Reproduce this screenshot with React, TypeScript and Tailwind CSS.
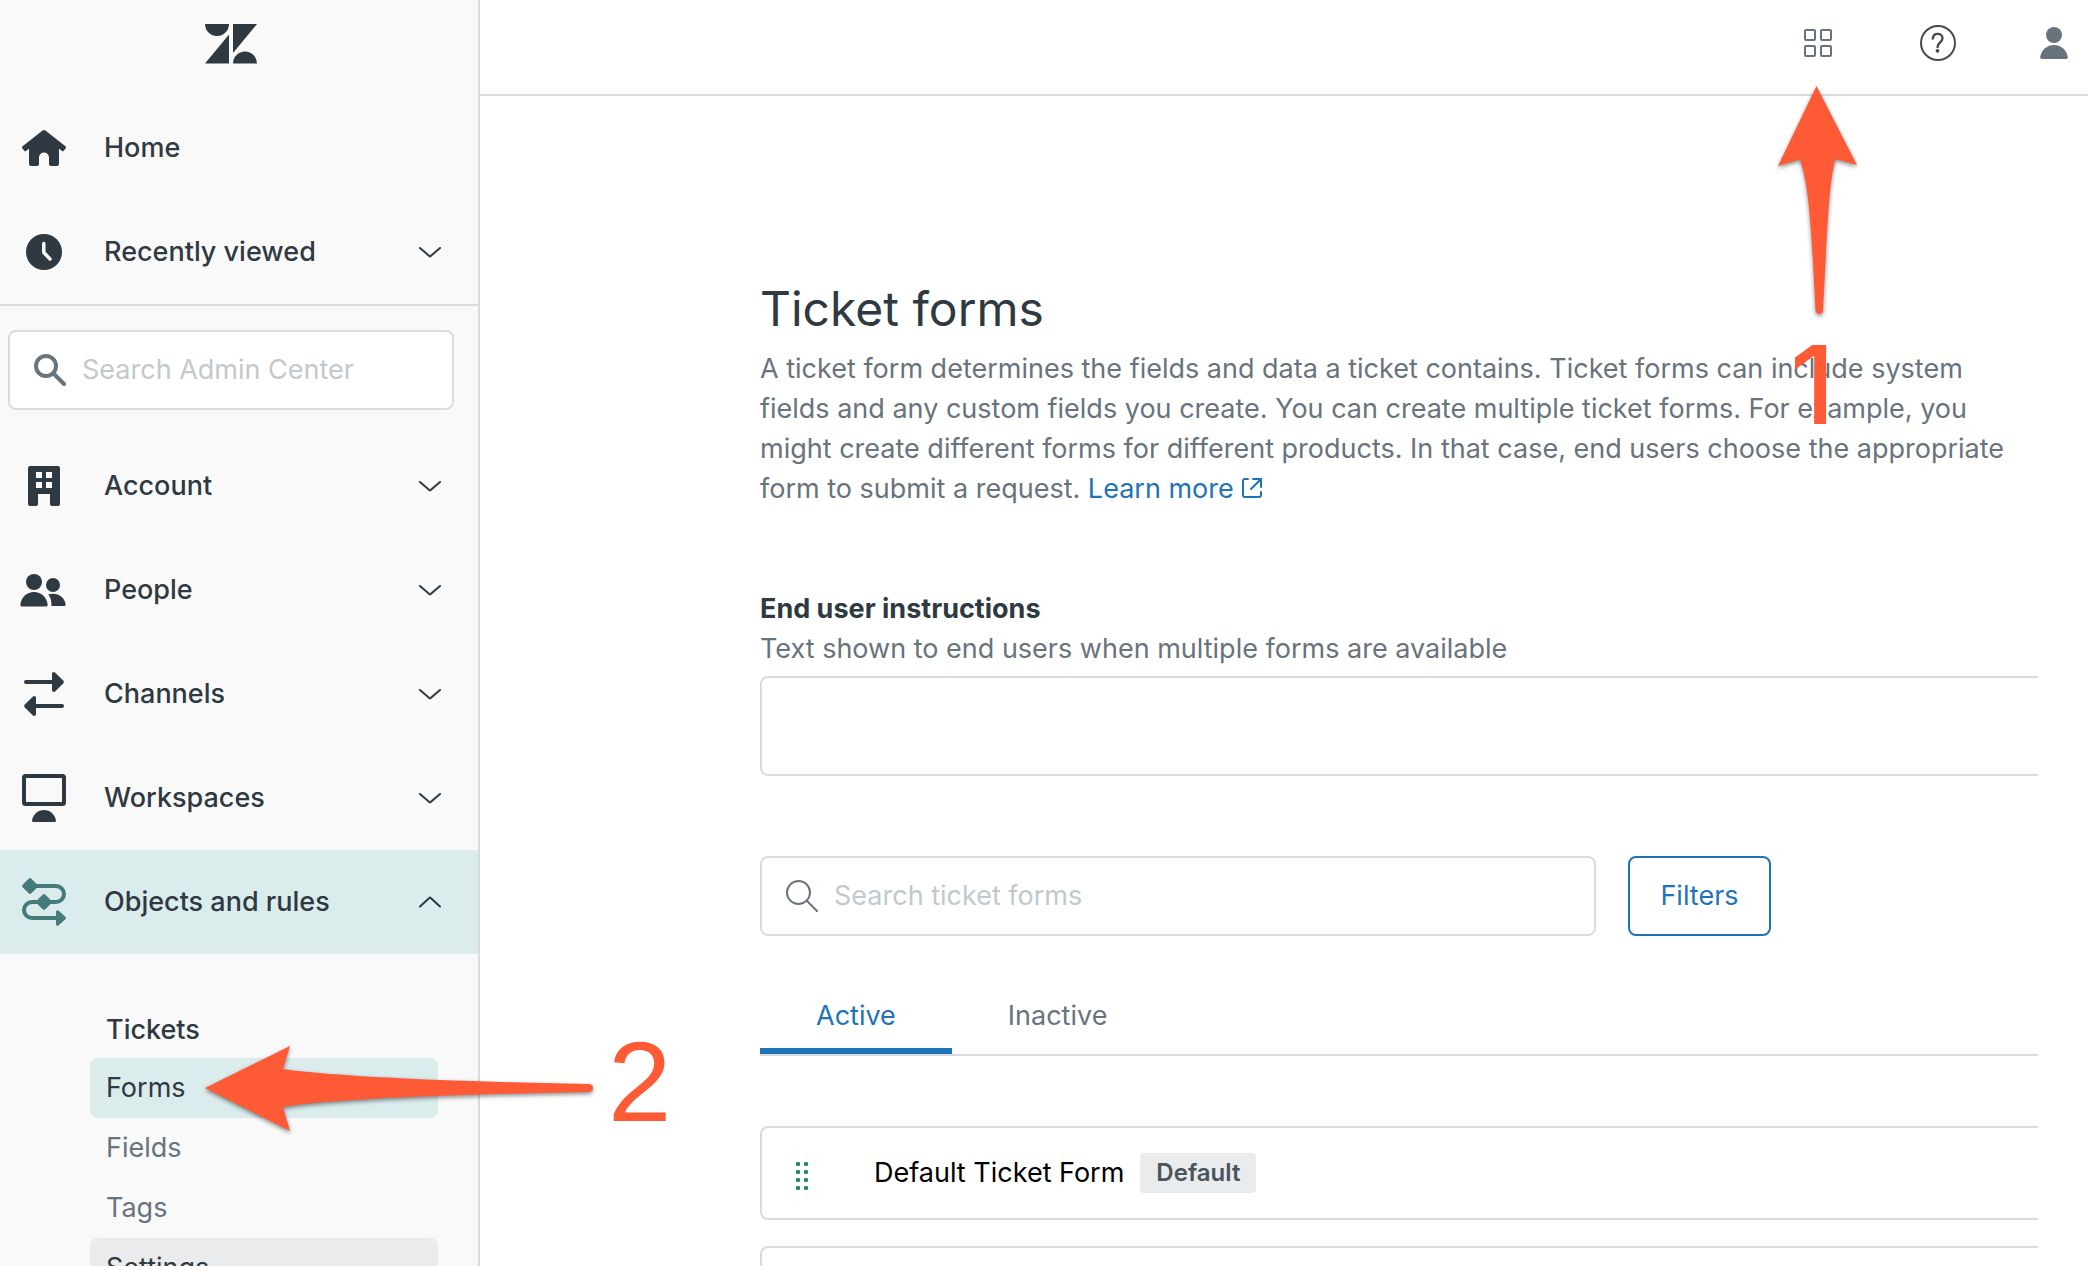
import { useState, type ReactNode } from "react";

interface NavItem {
  label: string;
  icon: ReactNode;
}

const buildingIcon = (
  <path
    fillRule="evenodd"
    d="M10 4h28a2 2 0 0 1 2 2v36a2 2 0 0 1-2 2h-6a2 2 0 0 1-2-2V32H18v10a2 2 0 0 1-2 2h-6a2 2 0 0 1-2-2V6a2 2 0 0 1 2-2Zm6 6v6h6v-6Zm10 0v6h6v-6ZM16 20v6h6v-6Zm10 0v6h6v-6Z"
  />
);

const peopleIcon = (
  <>
    <circle cx="14" cy="16" r="8" />
    <circle cx="33" cy="19" r="7" />
    <path d="M2 40.500C.8 40.500.3 39.800.4 38.600 1.300 31 6.800 26 14 26s12.700 5 13.600 12.600c.1 1.200-.4 1.900-1.600 1.900Z" />
    <path d="M28.200 28.400c1.500-.5 3-.7 4.800-.7 6.600 0 11.800 4.200 12.600 10.600.1 1-.3 1.700-1.300 1.700H31.400c.2-5-.5-8.600-3.200-11.600Z" />
  </>
);

const channelsIcon = (
  <>
    <path d="M6 12h28M42 36H14" fill="none" stroke="currentColor" strokeWidth="4" strokeLinecap="round" />
    <path d="M32 4c0-1.800 1.600-2.600 3-1.400l8.200 8c.9.900.9 1.900 0 2.800l-8.200 8c-1.400 1.200-3 .4-3-1.400Z" />
    <path d="M16 28c0-1.800-1.600-2.600-3-1.400l-8.200 8c-.9.900-.9 1.900 0 2.800l8.200 8c1.400 1.200 3 .4 3-1.400Z" />
  </>
);

const workspacesIcon = (
  <>
    <rect x="4" y="2" width="40" height="28" rx="1.500" fill="none" stroke="currentColor" strokeWidth="4" />
    <path d="M13.500 48c-1.200 0-1.700-.8-1.400-2C13.500 40 18 36 24 36s10.500 4 11.900 10c.3 1.200-.2 2-1.400 2Z" />
  </>
);

const navItems: NavItem[] = [
  { label: "Account", icon: buildingIcon },
  { label: "People", icon: peopleIcon },
  { label: "Channels", icon: channelsIcon },
  { label: "Workspaces", icon: workspacesIcon },
];

function NavIcon({ children, className = "" }: { children: ReactNode; className?: string }) {
  return (
    <svg viewBox="0 0 48 48" fill="currentColor" className={`size-12 shrink-0 ${className}`} aria-hidden="true">
      {children}
    </svg>
  );
}

function Chevron({ up = false }: { up?: boolean }) {
  return (
    <svg viewBox="0 0 24 12" className="h-3 w-6 shrink-0" fill="none" stroke="currentColor" strokeWidth="2" strokeLinecap="round" strokeLinejoin="round" aria-hidden="true">
      <path d={up ? "M2 10.500 11.300 2a1 1 0 0 1 1.400 0L22 10.500" : "M2 2l9.300 8a1 1 0 0 0 1.400 0L22 2"} />
    </svg>
  );
}

function NavButton({ label, icon }: NavItem) {
  return (
    <button type="button" className="flex h-26 w-full items-center pr-9 pl-5 text-left font-medium">
      <NavIcon>{icon}</NavIcon>
      <span className="ml-9 flex-1">{label}</span>
      <Chevron />
    </button>
  );
}

function Sidebar() {
  return (
    <aside className="w-[480px] shrink-0 border-r-2 border-[#d8dcde] bg-[#f9f9f9]">
      <div className="flex h-24 justify-center pt-6 pr-4">
        <svg viewBox="0 0 52 40" className="h-10 w-[52px]" fill="currentColor" role="img" aria-label="Zendesk">
          <path d="M0 0h24a12 12 0 0 1-24 0ZM24 10.500V39.500H0ZM28 0h24L28 29ZM28 39.500a12 12 0 0 1 24 0Z" />
        </svg>
      </div>
      <nav aria-label="Admin Center">
        <a href="#home" className="flex h-26 items-center pl-5 font-medium">
          <NavIcon>
            <path d="M22.600 6.500a2.200 2.200 0 0 1 2.800 0l20 15.700c.7.600.8 1.300.3 2l-1.700 2.400c-.5.700-1.300.8-2 .3L39 24.700V40a2 2 0 0 1-2 2h-6a2 2 0 0 1-2-2v-6.500a5 5 0 0 0-10 0V40a2 2 0 0 1-2 2h-6a2 2 0 0 1-2-2V24.700l-3 2.200c-.7.500-1.500.4-2-.3l-1.700-2.400c-.5-.7-.4-1.400.3-2Z" />
          </NavIcon>
          <span className="ml-9">Home</span>
        </a>
        <NavButton
          label="Recently viewed"
          icon={
            <>
              <circle cx="24" cy="24" r="18" />
              <path d="M23.800 15.500v9l6.200 6.500" fill="none" stroke="#f9f9f9" strokeWidth="3.500" strokeLinecap="round" strokeLinejoin="round" />
            </>
          }
        />
        <div className="border-t-2 border-[#d8dcde] pt-6 pr-6 pb-6 pl-2">
          <div className="flex h-20 items-center rounded-lg border-2 border-[#d8dcde] bg-white pl-6 text-[#68737d]">
            <svg viewBox="0 0 32 32" className="size-8 shrink-0" fill="none" stroke="currentColor" strokeWidth="4" strokeLinecap="round" aria-hidden="true">
              <circle cx="12" cy="12" r="10" />
              <path d="m19.500 19.500 10.500 10.500" />
            </svg>
            <input
              type="search"
              aria-label="Search Admin Center"
              placeholder="Search Admin Center"
              className="ml-4 w-full min-w-0 outline-none placeholder:text-[#c2c8cc]"
            />
          </div>
        </div>
        {navItems.map((item) => (
          <NavButton key={item.label} {...item} />
        ))}
        <button type="button" aria-expanded="true" className="flex h-26 w-full items-center bg-[#daecec] pr-9 pl-5 text-left font-medium">
          <NavIcon className="text-[#467b7c]">
            <path d="M12 8h24a8 8 0 0 1 0 16H12a8 8 0 0 0 0 16h26" fill="none" stroke="currentColor" strokeWidth="4" />
            <path d="M8.600.8a2 2 0 0 1 2.800 0l5.800 5.800a2 2 0 0 1 0 2.800l-5.800 5.800a2 2 0 0 1-2.800 0L2.800 9.400a2 2 0 0 1 0-2.800ZM22.600 16.800a2 2 0 0 1 2.800 0l5.800 5.800a2 2 0 0 1 0 2.800l-5.800 5.800a2 2 0 0 1-2.800 0l-5.800-5.800a2 2 0 0 1 0-2.800ZM36 34c0-1.700 1.500-2.500 2.700-1.300l6.700 6c.8.800.8 1.800 0 2.600l-6.700 6c-1.200 1.200-2.700.4-2.700-1.300Z" />
          </NavIcon>
          <span className="ml-9 flex-1">Objects and rules</span>
          <Chevron up />
        </button>
        <h2 className="mt-12 flex h-14 items-center pl-[106px] font-medium">Tickets</h2>
        <ul className="pr-10 pl-[90px]">
          <li className="relative">
            <a href="#forms" aria-current="page" className="flex h-15 items-center rounded-lg bg-[#daecec] pl-4">Forms</a>
            <StepTwo />
          </li>
          <li>
            <a href="#fields" className="flex h-15 items-center pl-4 text-[#68737d]">Fields</a>
          </li>
          <li>
            <a href="#tags" className="flex h-15 items-center pl-4 text-[#68737d]">Tags</a>
          </li>
          <li>
            <a href="#settings" className="flex h-15 items-center rounded-lg bg-[#e9ebed] pl-4">Settings</a>
          </li>
        </ul>
      </nav>
    </aside>
  );
}

// Callout pointing up at the product tray button
function StepOne() {
  return (
    <div className="pointer-events-none absolute top-14 left-1/2 z-10 -ml-10 w-20 text-[#ff5a36]">
      <svg viewBox="0 0 80 232" className="h-[232px] w-20 drop-shadow-[0_2px_2px_rgba(0,0,0,0.45)]" fill="currentColor" aria-hidden="true">
        <path d="M38.500 1 79 80 57.500 74C51 98 50 130 45 225.500q-.5 3.500-3.500 3.500t-4-3.500C33 130 30 98 22 74.500L0 81Z" />
      </svg>
      <span className="mt-2 ml-3 block font-['Inter'] text-[108px] leading-[120px] font-medium">1</span>
    </div>
  );
}

// Callout pointing left at the Forms link
function StepTwo() {
  return (
    <div className="pointer-events-none absolute -top-4 left-[114px] z-10 flex items-start text-[#ff5a36]">
      <svg viewBox="0 0 392 92" className="h-[92px] w-[392px] shrink-0 drop-shadow-[0_2px_2px_rgba(0,0,0,0.45)]" fill="currentColor" aria-hidden="true">
        <path d="M1 46 86 4l-7 23c40 6 140 12 306 15q4 .5 4 4t-4 4c-166 3-266 8-306 15l7 24Z" />
      </svg>
      <span className="ml-3 font-['Liberation_Sans'] text-[114px] leading-[80px]">2</span>
    </div>
  );
}

function TopBar() {
  return (
    <header className="flex h-24 items-center justify-end border-b-2 border-[#d8dcde] pr-5 pb-2 text-[#68737d]">
      <div className="relative">
        <button type="button" aria-label="Products" className="block">
          <svg viewBox="0 0 28 28" className="size-7" fill="none" stroke="currentColor" strokeWidth="2" aria-hidden="true">
            <rect x="1" y="1" width="10" height="10" rx="1" />
            <rect x="17" y="1" width="10" height="10" rx="1" />
            <rect x="1" y="17" width="10" height="10" rx="1" />
            <rect x="17" y="17" width="10" height="10" rx="1" />
          </svg>
        </button>
        <StepOne />
      </div>
      <button type="button" aria-label="Help" className="ml-22 text-[#4a4a4a]">
        <svg viewBox="0 0 36 36" className="size-9" fill="none" stroke="currentColor" strokeWidth="2" aria-hidden="true">
          <circle cx="18" cy="18" r="17" />
          <path d="M12.800 13.600c.2-3 2-4.700 4.900-4.700 2.800 0 4.800 1.700 4.800 4.300 0 4.200-4.900 4.300-4.900 8.800" strokeWidth="2.400" strokeLinecap="round" />
          <circle cx="17.500" cy="25.800" r="1.900" fill="currentColor" stroke="none" />
        </svg>
      </button>
      <button type="button" aria-label="Profile" className="ml-21">
        <svg viewBox="0 0 28 32" className="h-8 w-7" fill="currentColor" aria-hidden="true">
          <circle cx="14" cy="8" r="8" />
          <path d="M2 32c-1.400 0-2-.8-1.800-2C1.400 22.800 7 18 14 18s12.600 4.800 13.800 12c.2 1.200-.4 2-1.800 2Z" />
        </svg>
      </button>
    </header>
  );
}

const tabs = ["Active", "Inactive"];

function TicketForms() {
  const [tab, setTab] = useState("Active");

  return (
    <main className="pt-[181px] pr-[50px] pl-[280px]">
      <h1 className="text-[48px] leading-[64px]">Ticket forms</h1>
      <p className="mt-2 text-[#68737d]">
        A ticket form determines the fields and data a ticket contains. Ticket forms can include system fields and any custom
        fields you create. You can create multiple ticket forms. For example, you might create different forms for different
        products. In that case, end users choose the appropriate form to submit a request.{" "}
        <a href="#learn-more" className="text-[#1f73b7]">
          Learn more
          <svg viewBox="0 0 20 20" className="ml-2 inline size-5 align-baseline" fill="none" stroke="currentColor" strokeWidth="2" strokeLinecap="round" aria-hidden="true">
            <path d="M6 1H3a2 2 0 0 0-2 2v14a2 2 0 0 0 2 2h14a2 2 0 0 0 2-2v-3M9 11l9-9M11 1h8v8" />
          </svg>
        </a>
      </p>

      <div className="mt-20 flex flex-col">
        <label htmlFor="instructions" className="font-bold">End user instructions</label>
        <span id="instructions-hint" className="text-[#68737d]">Text shown to end users when multiple forms are available</span>
        <textarea
          id="instructions"
          aria-describedby="instructions-hint"
          className="mt-[7px] h-25 resize-none rounded-l-lg border-2 border-r-0 border-[#d8dcde] px-6 py-5 outline-none"
        />
      </div>

      <div className="mt-20 flex gap-8">
        <div className="flex h-20 w-[836px] items-center rounded-lg border-2 border-[#d8dcde] pl-6 text-[#68737d]">
          <svg viewBox="0 0 32 32" className="size-8 shrink-0" fill="none" stroke="currentColor" strokeWidth="2" strokeLinecap="round" aria-hidden="true">
            <circle cx="12.500" cy="12.500" r="11.500" />
            <path d="m20.500 20.500 10.500 10.500" />
          </svg>
          <input
            type="search"
            aria-label="Search ticket forms"
            placeholder="Search ticket forms"
            className="ml-4 w-full min-w-0 outline-none placeholder:text-[#c2c8cc]"
          />
        </div>
        <button type="button" className="h-20 w-[143px] rounded-lg border-2 border-[#1f73b7] text-[#1f73b7]">Filters</button>
      </div>

      <div role="tablist" className="mt-10 flex border-b-2 border-[#d8dcde]">
        {tabs.map((name) => (
          <button
            key={name}
            type="button"
            role="tab"
            aria-selected={tab === name}
            onClick={() => setTab(name)}
            className={`h-[78px] border-b-6 px-14 pt-2 ${tab === name ? "border-[#1f73b7] text-[#1f73b7]" : "border-transparent text-[#68737d]"}`}
          >
            {name}
          </button>
        ))}
      </div>

      <ul className="mt-[70px] flex flex-col gap-[26px]">
        <li className="flex h-[94px] items-center rounded-l-lg border-2 border-r-0 border-[#d8dcde] pl-[34px]">
          <svg viewBox="0 0 12 28" className="mt-1.5 h-7 w-3 shrink-0" fill="#228f67" aria-hidden="true">
            {[0, 8, 16, 24].map((y) => (
              <g key={y}>
                <rect x="0" y={y} width="4" height="4" rx="1" />
                <rect x="8" y={y} width="4" height="4" rx="1" />
              </g>
            ))}
          </svg>
          <span className="ml-[66px] text-black">Default Ticket Form</span>
          <span className="ml-4 rounded bg-[#e9ebed] px-4 text-[24px] font-semibold text-[#49545c]">Default</span>
        </li>
        <li className="h-[94px] rounded-l-lg border-2 border-r-0 border-[#d8dcde]" />
      </ul>
    </main>
  );
}

export default function App() {
  return (
    <div className="flex h-screen overflow-hidden bg-white font-['Inter',sans-serif] text-[27px] leading-[40px] text-[#2f3941]">
      <Sidebar />
      <div className="min-w-0 flex-1">
        <TopBar />
        <TicketForms />
      </div>
    </div>
  );
}
